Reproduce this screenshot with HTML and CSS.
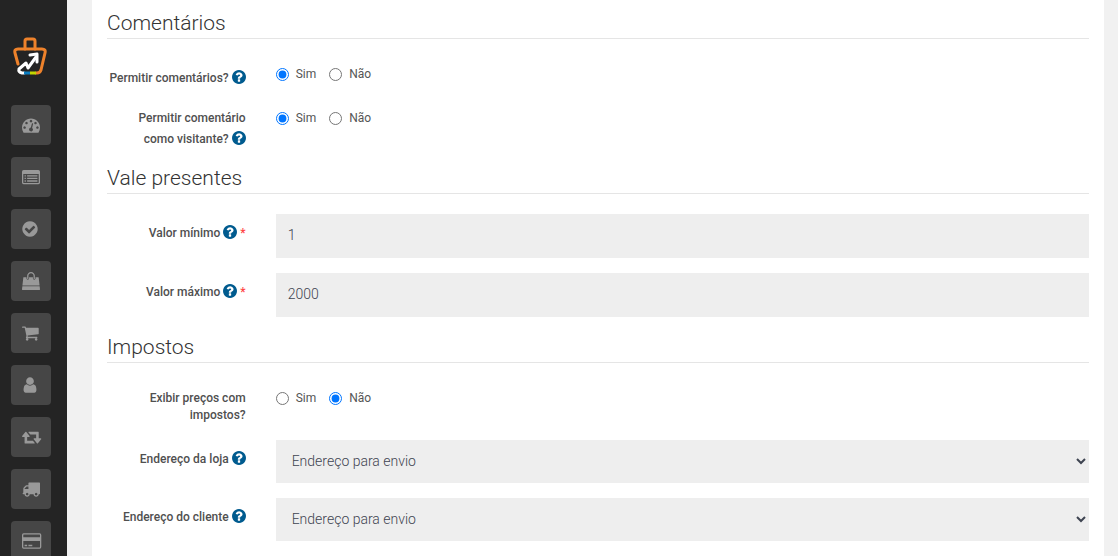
FILE: index.html
```html
<!DOCTYPE html>
<html lang="pt-br">
<head>
  <meta charset="UTF-8">
  <title>Configurações da loja</title>
  <link rel="stylesheet" href="styles.css">
</head>
<body>
  <svg class="hidden">
    <symbol id="help" viewBox="128 128 1536 1536"><path d="M1024 1376v-192q0-14-9-23t-23-9h-192q-14 0-23 9t-9 23v192q0 14 9 23t23 9h192q14 0 23-9t9-23zm256-672q0-88-55.5-163t-138.5-116-170-41q-243 0-371 213-15 24 8 42l132 100q7 6 19 6 16 0 25-12 53-68 86-92 34-24 86-24 48 0 85.5 26t37.5 59q0 38-20 61t-68 45q-63 28-115.5 86.5t-52.5 125.5v36q0 14 9 23t23 9h192q14 0 23-9t9-23q0-19 21.5-49.5t54.5-49.5q32-18 49-28.5t46-35 44.5-48 28-60.5 12.5-81zm384 192q0 209-103 385.5t-279.5 279.5-385.5 103-385.5-103-279.5-279.5-103-385.5 103-385.5 279.5-279.5 385.5-103 385.5 103 279.5 279.5 103 385.5z"/></symbol>
  </svg>

  <nav class="sidebar">
    <a class="logo" href="#" aria-label="Início">
      <svg viewBox="0 0 34 38" fill="none" stroke-linejoin="round" stroke-linecap="round">
        <path d="M5 27L2 16q-1-4 3-4h24q4 0 3 4l-4 17q-1 3-4 3h-1" stroke="#ee822b" stroke-width="3"/>
        <path d="M12 12V4q0-2 2-2h6q2 0 2 2v8" stroke="#ee822b" stroke-width="3"/>
        <path d="M11 36H9q-4-1-3-4l7-6 2 5 8-11" stroke="#fff" stroke-width="3"/>
        <path d="M17 18l7-1 0 8" stroke="#fff" stroke-width="3"/>
        <path d="M11 36h6" stroke="#0b7dc0" stroke-width="3" stroke-linecap="butt"/>
        <path d="M17 36h6" stroke="#c3d600" stroke-width="3" stroke-linecap="butt"/>
      </svg>
    </a>
    <a class="menu-item" href="#" aria-label="Painel"><svg viewBox="0 0 1792 1792"><path d="M384 1152q0-53-37.5-90.5t-90.5-37.5-90.5 37.5-37.5 90.5 37.5 90.5 90.5 37.5 90.5-37.5 37.5-90.5zm192-448q0-53-37.5-90.5t-90.5-37.5-90.5 37.5-37.5 90.5 37.5 90.5 90.5 37.5 90.5-37.5 37.5-90.5zm428 481l101-382q6-26-7.5-48.5t-38.5-29.5-48 6.5-30 39.5l-101 382q-60 5-107 43.5t-63 98.5q-20 77 20 146t117 89 146-20 89-117q16-60-6-117t-72-91zm660-33q0-53-37.5-90.5t-90.5-37.5-90.5 37.5-37.5 90.5 37.5 90.5 90.5 37.5 90.5-37.5 37.5-90.5zm-640-640q0-53-37.5-90.5t-90.5-37.5-90.5 37.5-37.5 90.5 37.5 90.5 90.5 37.5 90.5-37.5 37.5-90.5zm448 192q0-53-37.5-90.5t-90.5-37.5-90.5 37.5-37.5 90.5 37.5 90.5 90.5 37.5 90.5-37.5 37.5-90.5zm320 448q0 261-141 483-19 29-54 29h-1402q-35 0-54-29-141-221-141-483 0-182 71-348t191-286 286-191 348-71 348 71 286 191 191 286 71 348z"/></svg></a>
    <a class="menu-item" href="#" aria-label="Catálogo"><svg viewBox="0 50 1792 1792"><path fill-rule="evenodd" d="M160 256h1472q160 0 160 160v1088q0 160-160 160H160q-160 0-160-160V416q0-160 160-160zM128 640v864q0 32 32 32h1472q32 0 32-32V640zM256 768h128v128H256zM512 768h1024v128H512zM256 1024h128v128H256zM512 1024h1024v128H512zM256 1280h128v128H256zM512 1280h1024v128H512z"/></svg></a>
    <a class="menu-item" href="#" aria-label="Aprovações"><svg viewBox="100 0 1792 1792"><path d="M1412 734q0-28-18-46l-91-90q-19-19-45-19t-45 19l-408 407-226-226q-19-19-45-19t-45 19l-91 90q-18 18-18 46 0 27 18 45l362 362q19 19 45 19 27 0 46-19l543-543q18-18 18-45zm252 162q0 209-103 385.5t-279.5 279.5-385.5 103-385.5-103-279.5-279.5-103-385.5 103-385.5 279.5-279.5 385.5-103 385.5 103 279.5 279.5 103 385.5z"/></svg></a>
    <a class="menu-item" href="#" aria-label="Loja"><svg viewBox="0 0 1792 1792"><path d="M1757 1408l35 313q3 28-16 50-19 21-48 21h-1664q-29 0-48-21-19-22-16-50l35-313h1722zm-93-839l86 775h-1708l86-775q3-24 21-40.5t43-16.5h256v128q0 53 37.5 90.5t90.5 37.5 90.5-37.5 37.5-90.5v-128h384v128q0 53 37.5 90.5t90.5 37.5 90.5-37.5 37.5-90.5v-128h256q25 0 43 16.5t21 40.5zm-384-185v256q0 26-19 45t-45 19-45-19-19-45v-256q0-106-75-181t-181-75-181 75-75 181v256q0 26-19 45t-45 19-45-19-19-45v-256q0-159 112.5-271.5t271.5-112.5 271.5 112.5 112.5 271.5z"/></svg></a>
    <a class="menu-item" href="#" aria-label="Vendas"><svg viewBox="64 0 1792 1792"><path d="M704 1536q0 52-38 90t-90 38-90-38-38-90 38-90 90-38 90 38 38 90zm896 0q0 52-38 90t-90 38-90-38-38-90 38-90 90-38 90 38 38 90zm128-1088v512q0 24-16.5 42.5t-40.5 21.5l-1044 122q13 60 13 70 0 16-24 64h920q26 0 45 19t19 45-19 45-45 19h-1024q-26 0-45-19t-19-45q0-11 8-31.5t16-36 21.5-40 15.5-29.5l-177-823h-204q-26 0-45-19t-19-45 19-45 45-19h256q16 0 28.5 6.5t19.5 15.5 13 24.5 8 26 5.5 29.5 4.5 26h1201q26 0 45 19t19 45z"/></svg></a>
    <a class="menu-item" href="#" aria-label="Clientes"><svg viewBox="100 0 1792 1792"><path d="M1536 1399q0 109-62.5 187t-150.5 78h-854q-88 0-150.5-78t-62.5-187q0-85 8.5-160.5t31.5-152 58.5-131 94-89 134.5-34.5q131 128 313 128t313-128q76 0 134.5 34.5t94 89 58.5 131 31.5 152 8.5 160.5zm-256-887q0 159-112.5 271.5t-271.5 112.5-271.5-112.5-112.5-271.5 112.5-271.5 271.5-112.5 271.5 112.5 112.5 271.5z"/></svg></a>
    <a class="menu-item" href="#" aria-label="Devoluções"><svg viewBox="0 0 1792 1792"><path d="M1280 1504q0 32-32 32H288q-32 0-32-32V896H64q-64 0-64-64 0-24 15-41l320-384q20-23 49-23t49 23l320 384q15 17 15 41 0 64-64 64H512v384h576q16 0 25 11l160 192q7 10 7 21zM1920 1088q0 24-15 41l-320 384q-20 23-49 23t-49-23l-320-384q-15-17-15-41 0-64 64-64h192V640H832q-16 0-25-12L647 436q-7-9-7-20 0-32 32-32h960q32 0 32 32v608h192q64 0 64 64z"/></svg></a>
    <a class="menu-item" href="#" aria-label="Entregas"><svg viewBox="0 0 1792 1792"><path d="M640 1408q0-52-38-90t-90-38-90 38-38 90 38 90 90 38 90-38 38-90zm-384-512h384v-256h-158q-13 0-22 9l-195 195q-9 9-9 22v30zm1280 512q0-52-38-90t-90-38-90 38-38 90 38 90 90 38 90-38 38-90zm256-1088v1024q0 15-4 26.5t-13.5 18.5-16.5 11.5-23.5 6-22.5 2-25.5 0-22.5-.5q0 106-75 181t-181 75-181-75-75-181h-384q0 106-75 181t-181 75-181-75-75-181h-64q-3 0-22.5.5t-25.5 0-22.5-2-23.5-6-16.5-11.5-13.5-18.5-4-26.5q0-26 19-45t45-19v-320q0-8-.5-35t0-38 2.5-34.5 6.5-37 14-30.5 22.5-30l198-198q19-19 50.5-32t58.5-13h160v-192q0-26 19-45t45-19h1024q26 0 45 19t19 45z"/></svg></a>
    <a class="menu-item" href="#" aria-label="Pagamentos"><svg viewBox="0 0 1792 1792"><path fill-rule="evenodd" d="M160 128h1600q160 0 160 160v1216q0 160-160 160H160q-160 0-160-160V288q0-160 160-160zM160 256q-32 0-32 32v224h1664V288q0-32-32-32zM128 896v608q0 32 32 32h1600q32 0 32-32V896zM256 1280h256v128H256zM640 1280h384v128H640z"/></svg></a>
  </nav>

  <main class="content">
    <form class="panel">
      <fieldset>
        <legend>Comentários</legend>
        <div class="form-group" role="radiogroup" aria-labelledby="lbl-comentarios">
          <span class="control-label" id="lbl-comentarios"><span class="help">Permitir comentários? <svg><use href="#help"/></svg></span></span>
          <div class="control">
            <label class="radio"><input type="radio" name="comentarios" checked>Sim</label>
            <label class="radio"><input type="radio" name="comentarios">Não</label>
          </div>
        </div>
        <div class="form-group two-lines" role="radiogroup" aria-labelledby="lbl-visitante">
          <span class="control-label" id="lbl-visitante">Permitir comentário <span class="help">como visitante? <svg><use href="#help"/></svg></span></span>
          <div class="control">
            <label class="radio"><input type="radio" name="visitante" checked>Sim</label>
            <label class="radio"><input type="radio" name="visitante">Não</label>
          </div>
        </div>
      </fieldset>

      <fieldset>
        <legend>Vale presentes</legend>
        <div class="form-group required">
          <label class="control-label" for="valor-minimo"><span class="help">Valor mínimo <svg><use href="#help"/></svg></span></label>
          <div class="control"><input class="form-control" type="text" id="valor-minimo" value="1"></div>
        </div>
        <div class="form-group required">
          <label class="control-label" for="valor-maximo"><span class="help">Valor máximo <svg><use href="#help"/></svg></span></label>
          <div class="control"><input class="form-control" type="text" id="valor-maximo" value="2000"></div>
        </div>
      </fieldset>

      <fieldset>
        <legend>Impostos</legend>
        <div class="form-group two-lines" role="radiogroup" aria-labelledby="lbl-impostos">
          <span class="control-label" id="lbl-impostos">Exibir preços com impostos?</span>
          <div class="control">
            <label class="radio"><input type="radio" name="impostos">Sim</label>
            <label class="radio"><input type="radio" name="impostos" checked>Não</label>
          </div>
        </div>
        <div class="form-group">
          <label class="control-label" for="endereco-loja"><span class="help">Endereço da loja <svg><use href="#help"/></svg></span></label>
          <div class="control">
            <select class="form-control" id="endereco-loja">
              <option>Endereço para envio</option>
            </select>
          </div>
        </div>
        <div class="form-group">
          <label class="control-label" for="endereco-cliente"><span class="help">Endereço do cliente <svg><use href="#help"/></svg></span></label>
          <div class="control">
            <select class="form-control" id="endereco-cliente">
              <option>Endereço para envio</option>
            </select>
          </div>
        </div>
      </fieldset>
    </form>
  </main>
</body>
</html>
```
FILE: styles.css
```css
* {
  box-sizing: border-box;
}

body {
  display: flex;
  align-items: flex-start;
  margin: 0;
  background-color: #f1f1f1;
  color: #555;
  font-family: Roboto, sans-serif;
  font-size: 12px;
  line-height: 17px;
}

.hidden {
  display: none;
}

/* Menu lateral */
.sidebar {
  position: sticky;
  top: 0;
  display: flex;
  flex-direction: column;
  flex-shrink: 0;
  gap: 12px;
  width: 67px;
  height: 100vh;
  padding: 37px 11px 0;
  background-color: #242424;
  overflow: hidden;
}

.logo {
  flex-shrink: 0;
  height: 56px;
  padding-left: 2px;
}

.logo svg {
  display: block;
  width: 34px;
  height: 38px;
}

.menu-item {
  display: flex;
  flex-shrink: 0;
  align-items: center;
  width: 40px;
  height: 40px;
  padding-left: 11px;
  background-color: #464646;
  border-radius: 4px;
}

.menu-item svg {
  width: 18px;
  height: 18px;
  fill: #999;
  overflow: visible;
}

/* Formulário */
.content {
  flex: 1;
  min-width: 0;
  padding: 0 14px 0 25px;
}

.panel {
  min-height: 100vh;
  padding: 8px 15px 0;
  background-color: #fff;
}

fieldset {
  min-width: 0;
  margin: 0;
  padding: 0;
  border: 0;
}

legend {
  width: 100%;
  margin-bottom: 20px;
  padding: 0;
  border-bottom: 1px solid #e5e5e5;
  color: #333;
  font-size: 21px;
  font-weight: 300;
  line-height: 30px;
}

.form-group {
  display: flex;
  min-height: 29px;
  margin: 0 -15px 15px;
}

.form-group.two-lines {
  min-height: 42px;
}

.control-label {
  width: calc(100% / 6);
  padding: 7px 15px 0;
  color: #505050;
  font-weight: 500;
  text-align: right;
}

.help {
  display: inline-block;
  padding-top: 4px;
  line-height: 17px;
}

.help svg {
  width: 14px;
  height: 14px;
  fill: #005b8f;
  vertical-align: -2px;
}

.required .control-label::after {
  content: "*";
  margin-left: 3px;
  color: #f44;
}

.control {
  flex: 1;
  padding: 0 15px;
}

.radio {
  display: inline-flex;
  align-items: center;
  gap: 7px;
  margin-right: 10px;
  padding-top: 7px;
}

.radio input {
  width: 13px;
  height: 13px;
  margin: 0;
}

.form-control {
  display: block;
  width: 100%;
  height: 44px;
  padding: 8px 12px 10px;
  border: 0;
  border-radius: 0;
  background-color: #eee;
  color: #3e4451;
  font-family: inherit;
  font-size: 14px;
  font-weight: 300;
}

select.form-control {
  height: 43px;
}
```
